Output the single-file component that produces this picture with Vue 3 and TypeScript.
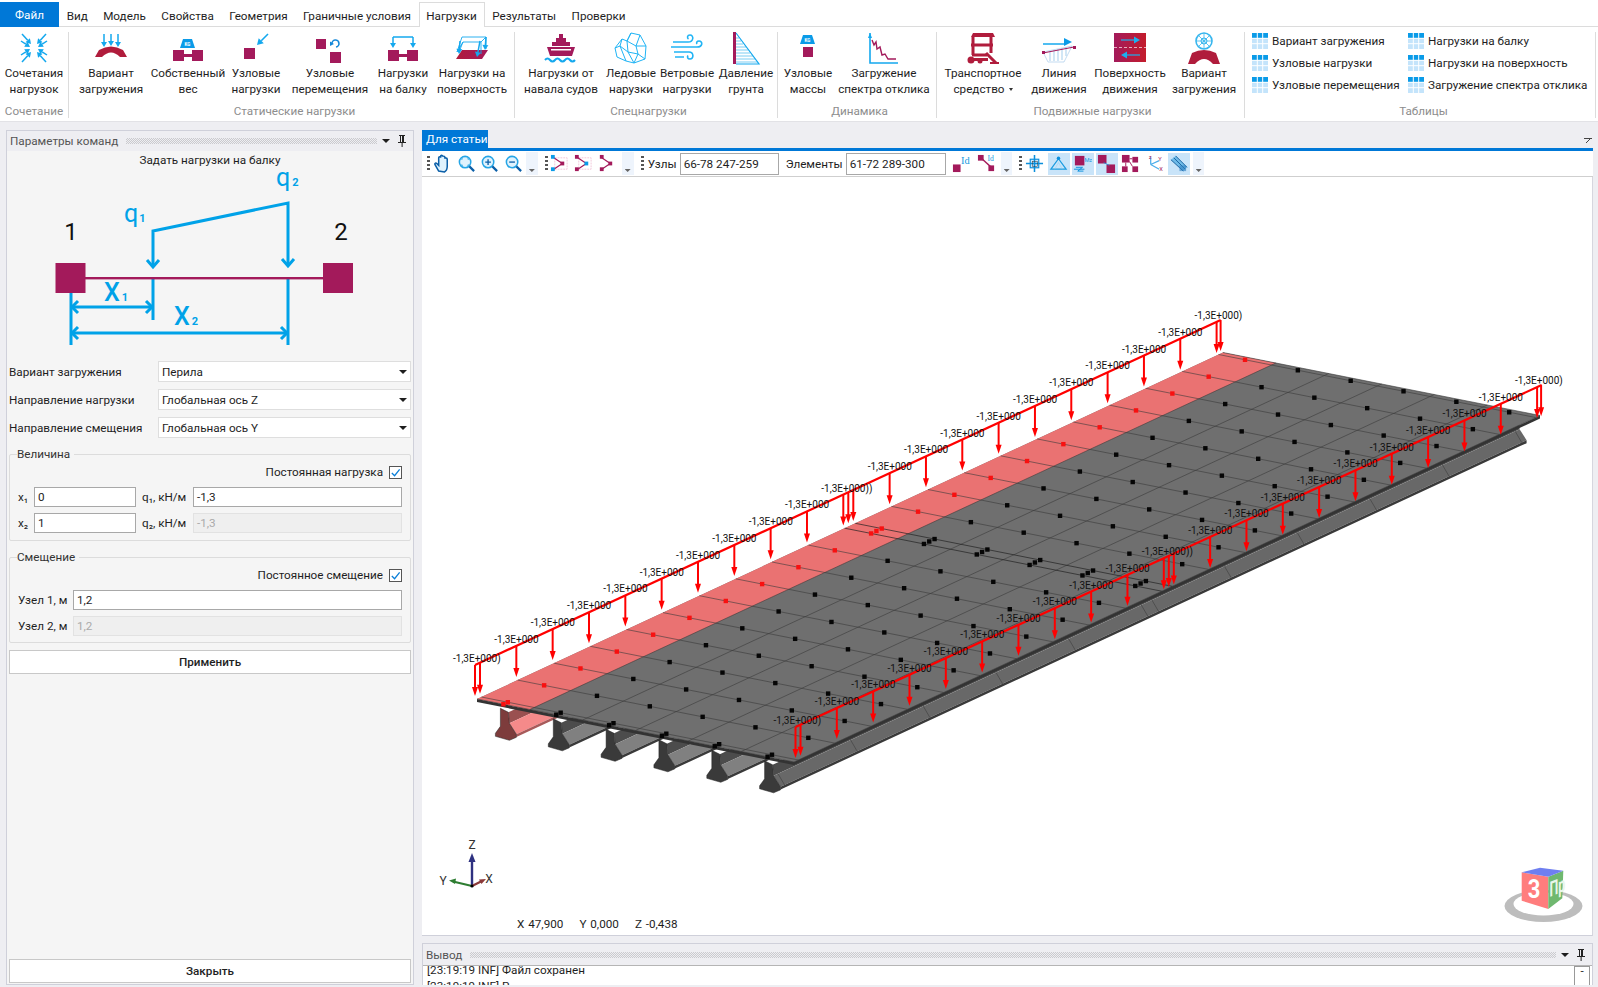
<template>
  <div class="app">
    <!-- Menu tabs -->
    <div class="menu">
      <div class="file-tab">Файл</div>
      <div
        v-for="tab in menuTabs"
        :key="tab"
        class="menu-tab"
        :class="{ active: tab === 'Нагрузки' }"
      >{{ tab }}</div>
    </div>

    <!-- Ribbon -->
    <div class="ribbon">
      <div v-for="group in ribbon" :key="group.label" class="r-group" :style="{ width: group.width + 'px', paddingLeft: group.pad + 'px' }">
        <div class="r-items">
          <div v-for="item in group.items" :key="item.icon + item.lines[0]" class="r-item" :style="{ width: item.width + 'px' }">
            <svg class="r-icon" viewBox="0 0 34 34" v-html="icons[item.icon]"></svg>
            <div class="r-text">
              <div v-for="(line, i) in item.lines" :key="line">{{ line }}<span v-if="item.drop && i === 1" class="drop-mark"></span></div>
            </div>
          </div>
        </div>
        <div class="r-label">{{ group.label }}</div>
      </div>
      <div class="r-group tables">
        <div class="t-grid">
          <div v-for="t in tableLinks" :key="t" class="t-link">
            <svg class="t-icon" viewBox="0 0 16 16" v-html="icons.table"></svg>
            <span>{{ t }}</span>
          </div>
        </div>
        <div class="r-label">Таблицы</div>
      </div>
    </div>

    <div class="main">
      <!-- Command parameters panel -->
      <aside class="panel">
        <div class="dock-head">
          <span class="dock-title">Параметры команд</span>
          <span class="dots"></span>
          <span class="caret"></span>
          <svg class="pin" viewBox="0 0 10 14"><path d="M2 1h6v1H7v6h2v1H5.6v4h-1V9H1V8h2V2H2zM4 2v6h1V2z" fill="#222" /></svg>
        </div>
        <div class="cmd-title">Задать нагрузки на балку</div>

        <svg class="beam-fig" viewBox="6 169 400 189">
          <g fill="none" stroke="#00a2e8" stroke-width="3">
            <path d="M153 267V231L288 203V266" />
            <path d="M147 260L153 267L159 260M282 259L288 266L294 259" />
            <path d="M153 279V320M288 278V345M71 293V345" />
            <path d="M71 307H153M71 333H288" />
            <path d="M78 301L72 307L78 313M146 301L152 307L146 313M78 327L72 333L78 339M281 327L287 333L281 339" />
          </g>
          <rect x="85" y="277" width="238" height="2.4" fill="#a31a5b" />
          <rect x="55.5" y="263" width="30" height="30" fill="#a31a5b" />
          <rect x="323" y="263" width="30" height="30" fill="#a31a5b" />
          <text x="71" y="240" class="fig-num">1</text>
          <text x="341" y="240" class="fig-num">2</text>
          <text x="124" y="222" class="fig-q">q<tspan class="fig-sub" dx="1">1</tspan></text>
          <text x="276" y="186" class="fig-q">q<tspan class="fig-sub" dx="2">2</tspan></text>
          <text x="104" y="301" class="fig-q fig-x">X<tspan class="fig-sub" dx="2">1</tspan></text>
          <text x="174" y="325" class="fig-q fig-x">X<tspan class="fig-sub" dx="2">2</tspan></text>
        </svg>

        <div class="combos">
          <div v-for="c in combos" :key="c.label" class="combo-row">
            <span class="combo-label">{{ c.label }}</span>
            <div class="combo"><span>{{ c.value }}</span><i class="caret"></i></div>
          </div>
        </div>

        <fieldset class="box first">
          <legend>Величина</legend>
          <div class="check-row">
            <span>Постоянная нагрузка</span>
            <span class="check"><svg viewBox="0 0 12 12"><path d="M2 6.5L5 9.5L10.5 2.5" fill="none" stroke="#0a7fd8" stroke-width="1.4" /></svg></span>
          </div>
          <div class="load-grid">
            <span>x₁</span>
            <div class="field">0</div>
            <span class="q-label">q₁, кН/м</span>
            <div class="field">-1,3</div>
            <span>x₂</span>
            <div class="field">1</div>
            <span class="q-label">q₂, кН/м</span>
            <div class="field off">-1,3</div>
          </div>
        </fieldset>

        <fieldset class="box second">
          <legend>Смещение</legend>
          <div class="check-row">
            <span>Постоянное смещение</span>
            <span class="check"><svg viewBox="0 0 12 12"><path d="M2 6.5L5 9.5L10.5 2.5" fill="none" stroke="#0a7fd8" stroke-width="1.4" /></svg></span>
          </div>
          <div class="shift-grid">
            <span>Узел 1, м</span>
            <div class="field">1,2</div>
            <span>Узел 2, м</span>
            <div class="field off">1,2</div>
          </div>
        </fieldset>

        <div class="btn apply">Применить</div>
        <div class="btn close">Закрыть</div>
      </aside>

      <div class="work">
        <div class="doc-tabs">
          <div class="doc-tab">Для статьи</div>
          <span class="doc-menu"></span>
        </div>

        <!-- Viewport toolbar -->
        <div class="toolbar">
          <span class="grip g1"></span>
          <span v-for="b in tools1" :key="b" class="tbtn"><svg viewBox="0 0 20 20" v-html="icons[b]"></svg></span>
          <span class="more"></span>
          <span class="grip"></span>
          <span v-for="b in tools2" :key="b" class="tbtn"><svg viewBox="0 0 20 20" v-html="icons[b]"></svg></span>
          <span class="more m2"></span>
          <span class="grip"></span>
          <span class="t-label l1">Узлы</span>
          <div class="t-field f1">66-78 247-259</div>
          <span class="t-label l2">Элементы</span>
          <div class="t-field f2">61-72 289-300</div>
          <span v-for="b in tools3" :key="b" class="tbtn id-btn"><svg viewBox="0 0 20 20" v-html="icons[b]"></svg></span>
          <span class="more m3"></span>
          <span class="grip"></span>
          <span class="t-set">
            <span v-for="b in tools4" :key="b.icon" class="tbtn small" :class="{ on: b.on }"><svg viewBox="0 0 20 20" v-html="icons[b.icon]"></svg></span>
          </span>
          <span class="more m4"></span>
        </div>

        <!-- 3D view -->
        <div class="viewport">
          <svg class="scene" viewBox="422 177 1171 759">
            <g v-for="g in girders" :key="g.key">
              <path :d="g.web" :fill="g.webFill" />
              <path :d="g.flange" :fill="g.flangeFill" />
              <path :d="g.lip" :fill="g.lipFill" />
              <path :d="g.section" :fill="g.sectionFill" stroke="#222" stroke-width="0.5" />
            </g>
            <path v-for="(t, i) in girderTicks" :key="'tk' + i" :d="t" stroke="#444" stroke-width="0.7" />

            <path :d="edgeFront" fill="#333" />
            <path :d="edgeRight" fill="#333" />
            <path :d="deckPath" fill="#6f6f6f" />
            <path :d="stripPath" fill="#ea7272" />
            <path :d="gridPath" fill="none" stroke="#3a3a3a" stroke-width="0.6" />
            <path :d="midPath" fill="none" stroke="#222" stroke-width="0.7" />
            <rect v-for="(d, i) in nodes" :key="'n' + i" :x="d.x - 2.2" :y="d.y - 2.2" width="4.4" height="4.4" :fill="d.red ? '#f81010' : '#050505'" />

            <g v-for="(l, li) in loads" :key="'l' + li">
              <path :d="l.beam" stroke="#f00" stroke-width="2.2" fill="none" />
              <g v-for="(a, ai) in l.arrows" :key="ai">
                <path :d="a.shaft" stroke="#f00" stroke-width="2" />
                <path :d="a.head" fill="#f00" />
              </g>
              <text v-for="(a, ai) in l.labels" :key="'t' + ai" :x="a.x" :y="a.y" class="load-text">{{ a.text }}</text>
            </g>

            <!-- Axis triad -->
            <path d="M472 886V860" stroke="#2e3180" stroke-width="2.4" />
            <path d="M472 853L468.500 862H475.500Z" fill="#2e3180" />
            <path d="M472 886L453 881.500" stroke="#2e7d32" stroke-width="2.2" />
            <path d="M449 880.500L456 878.500L455 884Z" fill="#2e7d32" />
            <path d="M472 886L482 881" stroke="#8b3a3a" stroke-width="2.2" />
            <path d="M486 879L479 879.500L481.500 884Z" fill="#8b3a3a" />
            <circle cx="472" cy="886" r="1.600" fill="#000" />
            <text x="472" y="849" class="axis-text">Z</text>
            <text x="443" y="885" class="axis-text">Y</text>
            <text x="489" y="883" class="axis-text">X</text>

            <!-- View cube -->
            <ellipse cx="1543.500" cy="906" rx="39" ry="16" fill="#bdbdbd" />
            <ellipse cx="1543.500" cy="904" rx="30" ry="11.500" fill="#fff" />
            <path d="M1521.700 872.300L1548.300 876.700V909L1521.700 900.700Z" fill="#ff7d7d" />
            <path d="M1548.300 876.700L1563.300 870.700L1562.300 898.300L1548.300 909Z" fill="#6fb86f" />
            <path d="M1521.700 872.300L1540 867.700L1563.300 870.700L1548.300 876.700Z" fill="#6f7ff0" />
            <text transform="translate(1534 898) scale(1 1.150)" class="cube-num">3</text>
            <text transform="translate(1549.500 897) skewY(-22) scale(.62 1.050)" class="cube-side">Пр</text>
          </svg>
          <div class="coords"><span>X 47,900</span><span>Y 0,000</span><span>Z -0,438</span></div>
        </div>

        <!-- Output panel -->
        <div class="output">
          <div class="dock-head out-head">
            <span class="dock-title">Вывод</span>
            <span class="dots"></span>
            <span class="caret"></span>
            <svg class="pin" viewBox="0 0 10 14"><path d="M2 1h6v1H7v6h2v1H5.6v4h-1V9H1V8h2V2H2zM4 2v6h1V2z" fill="#222" /></svg>
          </div>
          <div class="log">
            <div class="log-lines">
              <div>[23:19:19 INF] Файл сохранен</div>
              <div>[23:19:19 INF] Р</div>
            </div>
            <div class="scroll"><span>-</span></div>
          </div>
        </div>
      </div>
    </div>
  </div>
</template>

<script setup lang="ts">
interface RibbonItem {
  icon: string;
  lines: string[];
  width: number;
  drop?: boolean;
}

const MAG = '#a31a5b';
const RED = '#b01c3c';
const CY = '#14a8ee';

const menuTabs = ['Вид', 'Модель', 'Свойства', 'Геометрия', 'Граничные условия', 'Нагрузки', 'Результаты', 'Проверки'];

// small helpers for the icon markup
function arr(x1: number, y1: number, x2: number, y2: number, c = CY, w = 1.5, h = 5): string {
  const a = Math.atan2(y2 - y1, x2 - x1);
  const bx = x2 - Math.cos(a) * h;
  const by = y2 - Math.sin(a) * h;
  const nx = -Math.sin(a) * h * 0.6;
  const ny = Math.cos(a) * h * 0.6;
  return `<path d="M${x1} ${y1}L${bx} ${by}" stroke="${c}" stroke-width="${w}" fill="none"/><path d="M${x2} ${y2}L${bx + nx} ${by + ny}L${bx - nx} ${by - ny}Z" fill="${c}"/>`;
}
const sq = (x: number, y: number, s: number, c = MAG) => `<rect x="${x}" y="${y}" width="${s}" height="${s}" fill="${c}"/>`;
const kg = (x: number, y: number) =>
  `<path d="M${x + 3} ${y}H${x + 12}L${x + 15} ${y + 9}H${x}Z" fill="#0a9be8"/><text x="${x + 7.5}" y="${y + 7}" font-size="4.500" font-weight="700" fill="#fff" text-anchor="middle" font-family="Roboto,sans-serif">KG</text>`;
const arch = `<path d="M1 25L5 18Q17 11 29 18L33 25H26Q17 16 8 25Z" fill="${RED}"/>`;

const icons: Record<string, string> = {
  comb:
    arr(5, 2, 14, 12) + arr(29, 2, 20, 12) + arr(5, 30, 14, 20) + arr(29, 30, 20, 20) +
    arr(4, 9, 13, 15) + arr(30, 9, 21, 15) + arr(4, 23, 13, 17) + arr(30, 23, 21, 17),
  variant: arch + arr(10, 2, 10, 15) + arr(17, 2, 17, 14) + arr(24, 2, 24, 15),
  selfw: kg(9, 7) + sq(2, 18, 11) + sq(21, 18, 11) + `<rect x="12" y="22" width="10" height="3" fill="${MAG}"/>`,
  nodeload: sq(5, 16, 11) + arr(29, 2, 18, 13, CY, 1.6, 6),
  nodedisp: sq(3, 7, 10) + sq(17, 20, 11) +
    `<path d="M19 12A3.500 3.500 0 1 1 23 15" stroke="#1487d8" stroke-width="1.600" fill="none"/><path d="M17 9.500L21 12L17 14Z" fill="#1487d8"/>`,
  beamload: sq(2, 18, 11) + sq(21, 18, 11) + `<rect x="12" y="22" width="10" height="3" fill="${MAG}"/>` +
    `<path d="M7 5H27" stroke="${CY}" stroke-width="1.500"/>` + arr(7, 5, 7, 16) + arr(27, 5, 27, 16),
  surface:
    `<defs><linearGradient id="sf" x1="0" x2="1"><stop offset="0" stop-color="${RED}"/><stop offset="1" stop-color="${MAG}"/></linearGradient></defs>` +
    `<path d="M1 27L7 18H33L27 27Z" fill="url(#sf)"/>` +
    `<path d="M2 20L7 5H31L26 10H8ZM26 10L26 22M31 5V17M8 10L4 20" stroke="${CY}" fill="none" stroke-width=".9"/>` +
    arr(5, 9, 4, 22) + arr(25, 9, 22, 25) + arr(31, 5, 30, 18),
  ship:
    `<path d="M15 2H19V6H22V10H26V14H8V10H12V6H15Z" fill="${MAG}"/><path d="M3 15H31L28 24H6Z" fill="${MAG}"/><rect x="7" y="17" width="20" height="1.500" fill="#fff"/>` +
    `<path d="M1 28Q3.500 25 6 28T11 28T16 28T21 28T26 28T31 28" stroke="${CY}" stroke-width="2" fill="none"/>`,
  ice:
    `<g stroke="#20b4f5" stroke-width="1" fill="none"><path d="M17 1L26 3L32 14L31 27L20 31L12 29L3 25L1 16L8 7L13 9Z"/><path d="M13 9L17 1M13 9L22 14L26 3M22 14L32 14M22 14L24 22L31 27M24 22L14 20L20 31M14 20L13 9M14 20L6 14L8 7M6 14L1 16M6 14L12 29M24 22L20 31"/></g>`,
  wind:
    `<g stroke="#20b4f5" stroke-width="1.600" fill="none"><path d="M3 10H18C24 10 24 3 20 3C17 3 17 6 18.500 7"/><path d="M3 15H27C33 15 33 9 29 9C27 9 26 10.500 27 12"/><path d="M4 20H19C24 20 24 27 20 27C17.500 27 17 25 18 23.500"/><path d="M1 15H3M5 25H14"/></g>`,
  pressure:
    `<g stroke="#5ac0ef" stroke-width=".8"><path d="M7 6H10M7 9H12M7 12H14M7 15H17M7 18H19M7 21H21M7 24H24M7 27H26M7 30H29"/></g>` +
    `<path d="M7 1L30 32H7" fill="none" stroke="${CY}" stroke-width="1.200"/><rect x="4" y="0" width="3" height="32" fill="${MAG}"/>`,
  mass: kg(9, 3) + sq(12, 15, 10) + `<rect x="11" y="13" width="12" height="2" fill="#fff"/>`,
  spectrum:
    `<path d="M3 1V31H31" fill="none" stroke="${CY}" stroke-width="1.600"/><path d="M3 1L1 6H5Z" fill="${CY}"/>` +
    `<path d="M5 8L7 13L9 10L10 17L13 15L15 23L18 22L21 27H29" fill="none" stroke="${MAG}" stroke-width="1.400"/>`,
  truck:
    `<path d="M7 1H27L29 5H5Z" fill="${RED}"/><g fill="none" stroke="${RED}" stroke-width="3"><path d="M7 5V23M25 5V21M5 13H27M6 23H21"/><path d="M20 21L30 31"/></g><path d="M2 26H22V29H2ZM24 30H33V32H24Z" fill="${RED}"/><circle cx="5" cy="28" r="3.500" fill="${RED}"/><circle cx="14" cy="29" r="2.500" fill="${RED}"/><circle cx="16" cy="18" r="2" fill="#fff"/>`,
  line:
    `<path d="M1 20L30 14L22 30H6Z" fill="none" stroke="#9cc5e8" stroke-width=".6"/><path d="M8 19V29M12 18V29M16 17V29M20 16V28M24 15V24" stroke="#7fb9e4" stroke-width=".7"/>` +
    `<path d="M1 12H22" stroke="${CY}" stroke-width="1.500"/><path d="M30 10L22 6V14Z" fill="#0a9be8"/><path d="M1 21L32 15" stroke="${MAG}" stroke-width="1"/>` + sq(0, 19, 3) + sq(31, 14, 3),
  moving:
    `<defs><linearGradient id="mv" x1="0" x2="1"><stop offset="0" stop-color="${MAG}"/><stop offset="1" stop-color="#c31c2c"/></linearGradient></defs>` +
    `<rect x="1" y="1" width="32" height="29" fill="url(#mv)"/><path d="M1 15.500H33" stroke="#f3d4dc" stroke-dasharray="3 2" stroke-width=".8"/>` +
    arr(8, 8, 27, 8, '#1ab0f0', 1.2, 6) + arr(27, 23, 8, 23, '#1ab0f0', 1.2, 6),
  wheel:
    arch.replace('M1 25L5 18', 'M1 32L5 21').replace('Q17 11 29 18L33 25H26Q17 16 8 25Z', 'Q17 15 29 21L33 32H26Q17 22 8 32Z') +
    `<g stroke="#38b6ee" fill="none"><circle cx="17" cy="9" r="8" stroke-width="1.600"/><circle cx="17" cy="9" r="3" stroke-width="1"/><path d="M17 1V17M9 9H25M11.500 3.500L22.500 14.500M22.500 3.500L11.500 14.500" stroke-width=".8"/></g>`,
  table:
    `<rect x="0" y="0" width="16" height="16" fill="#c4e4fb"/><rect x="0" y="0" width="16" height="5" fill="#0a9be8"/>` +
    `<path d="M5.300 0V16M10.700 0V16M0 5.300H16M0 10.700H16" stroke="#fff" stroke-width="1"/>`,
  // toolbar
  hand:
    `<path d="M6 18L2 11C1.500 9.500 3 9 4 10L6 12V4C6 2.500 8 2.500 8 4V2.500C8 1 10 1 10 2.500V3C10 2 12.500 2 12.500 3.500V5C12.500 4 15 4 15 5.500V13C15 16 14 18 12 19Z" fill="#dff2fd" stroke="#0b5fa8" stroke-width="1.600"/>`,
  zoomfit:
    `<circle cx="8.500" cy="8.500" r="6" fill="#dff2fd" stroke="#25a5e6" stroke-width="1.600"/><path d="M13 13L18 18" stroke="#0b5fa8" stroke-width="2.400"/><path d="M5 6V5H6M11 5H12V6M12 11V12H11M6 12H5V11" stroke="#25a5e6" fill="none"/>`,
  zoomin:
    `<circle cx="8.500" cy="8.500" r="6" fill="#dff2fd" stroke="#25a5e6" stroke-width="1.600"/><path d="M13 13L18 18" stroke="#0b5fa8" stroke-width="2.400"/><path d="M5.500 8.500H11.500M8.500 5.500V11.500" stroke="#0b5fa8" stroke-width="1.400"/>`,
  zoomout:
    `<circle cx="8.500" cy="8.500" r="6" fill="#dff2fd" stroke="#25a5e6" stroke-width="1.600"/><path d="M13 13L18 18" stroke="#0b5fa8" stroke-width="2.400"/><path d="M5.500 8.500H11.500" stroke="#0b5fa8" stroke-width="1.400"/>`,
  sel1:
    `<rect x="5" y="4" width="13" height="12" fill="none" stroke="#eeb6cf" stroke-width=".8" stroke-dasharray="2 1"/><path d="M4 4L13 10L4 16" fill="none" stroke="${MAG}" stroke-width="1.300"/>` +
    sq(1, 1, 4, '#0a9be8') + sq(11, 8, 4, MAG) + sq(1, 14, 4, '#0a9be8'),
  sel2:
    `<rect x="5" y="4" width="13" height="12" fill="none" stroke="#eeb6cf" stroke-width=".8" stroke-dasharray="2 1"/><path d="M4 4L13 10L4 16" fill="none" stroke="${MAG}" stroke-width="1.300"/>` +
    sq(1, 1, 4) + sq(11, 8, 4, '#0a9be8') + sq(1, 14, 4),
  sel3: `<path d="M5 4L14 10L5 16" fill="none" stroke="${MAG}" stroke-width="1.300"/>` + sq(3, 1, 4) + sq(12, 8, 4) + sq(3, 14, 4),
  idnode: sq(1, 11, 8) + `<text x="9.500" y="10" font-size="11" fill="#1a9be0" font-family="Liberation Serif,serif">Id</text>`,
  idelem:
    `<path d="M4 4L15 14" stroke="${MAG}" stroke-width="1.600"/>` + sq(1, 1, 6) + sq(12, 12, 6) +
    `<text x="11" y="7.500" font-size="8" fill="#1a9be0" font-family="Liberation Serif,serif">Id</text>`,
  target:
    `<rect x="5.500" y="5.500" width="9" height="9" fill="#cde6f8" stroke="#0a8fdc" stroke-width="1.200"/><path d="M10 1V19M1 10H19" stroke="#0a8fdc" stroke-width="1.600"/><rect x="8" y="8" width="5" height="5" fill="none" stroke="#333" stroke-width=".5"/>`,
  support:
    `<path d="M2 16H18L10 5Z" fill="none" stroke="#1a9be0" stroke-width="1.300"/><path d="M6 16L10 9M14 16L10 9" stroke="#8ed0f3" stroke-width=".5"/>` + `<circle cx="10" cy="4.500" r="1.800" fill="#0a8fdc"/>`,
  elemid:
    sq(2, 2, 10) + `<path d="M1 16H12M3 14H10L5 18H11" stroke="#0a8fdc" fill="none" stroke-width="1"/><text x="12" y="8" font-size="6" fill="#1a9be0" font-family="Roboto,sans-serif">Mz</text>`,
  pair: sq(1, 1, 9) + sq(10, 11, 9) + `<path d="M7 9L13 12" stroke="#0a8fdc" stroke-width=".8"/>`,
  group: sq(1, 1, 8) + sq(12, 3, 6) + sq(1, 13, 6) + sq(12, 13, 6) + `<path d="M5 9V13M9 8L12 13M9 5H12" stroke="${MAG}"/>`,
  axes:
    `<path d="M6 11V3M6 11L15 7M6 11L15 16" stroke="#4aaeea" stroke-width="1.300" fill="none"/><text x="4" y="5" font-size="6" fill="${MAG}" font-family="Roboto,sans-serif">z</text><text x="14" y="7" font-size="6" fill="${MAG}" font-family="Roboto,sans-serif">Y</text><text x="15" y="18" font-size="6" fill="${MAG}" font-family="Roboto,sans-serif">X</text>`,
  girder:
    `<path d="M2 6L7 2L19 14L15 18Z" fill="#6fbbe8"/><path d="M2 6L15 18M5 4L17 16M7 2L19 14" stroke="#16609e" stroke-width="1"/><rect x="11" y="12" width="7" height="6" fill="#2e7fbf" opacity=".6"/>`,
};

const ribbon: { label: string; width: number; pad: number; items: RibbonItem[] }[] = [
  { label: 'Сочетание', width: 69, pad: 0, items: [{ icon: 'comb', lines: ['Сочетания', 'нагрузок'], width: 68 }] },
  {
    label: 'Статические нагрузки',
    width: 446,
    pad: 6,
    items: [
      { icon: 'variant', lines: ['Вариант', 'загружения'], width: 72 },
      { icon: 'selfw', lines: ['Собственный', 'вес'], width: 82 },
      { icon: 'nodeload', lines: ['Узловые', 'нагрузки'], width: 54 },
      { icon: 'nodedisp', lines: ['Узловые', 'перемещения'], width: 94 },
      { icon: 'beamload', lines: ['Нагрузки', 'на балку'], width: 52 },
      { icon: 'surface', lines: ['Нагрузки на', 'поверхность'], width: 86 },
    ],
  },
  {
    label: 'Спецнагрузки',
    width: 263,
    pad: 5,
    items: [
      { icon: 'ship', lines: ['Нагрузки от', 'навала судов'], width: 82 },
      { icon: 'ice', lines: ['Ледовые', 'нарузки'], width: 58 },
      { icon: 'wind', lines: ['Ветровые', 'нагрузки'], width: 54 },
      { icon: 'pressure', lines: ['Давление', 'грунта'], width: 64 },
    ],
  },
  {
    label: 'Динамика',
    width: 159,
    pad: 5,
    items: [
      { icon: 'mass', lines: ['Узловые', 'массы'], width: 50 },
      { icon: 'spectrum', lines: ['Загружение', 'спектра отклика'], width: 102 },
    ],
  },
  {
    label: 'Подвижные нагрузки',
    width: 308,
    pad: 4,
    items: [
      { icon: 'truck', lines: ['Транспортное', 'средство'], width: 84, drop: true },
      { icon: 'line', lines: ['Линия', 'движения'], width: 68 },
      { icon: 'moving', lines: ['Поверхность', 'движения'], width: 74 },
      { icon: 'wheel', lines: ['Вариант', 'загружения'], width: 74 },
    ],
  },
];

const tableLinks = [
  'Вариант загружения',
  'Нагрузки на балку',
  'Узловые нагрузки',
  'Нагрузки на поверхность',
  'Узловые перемещения',
  'Загружение спектра отклика',
];

const combos = [
  { label: 'Вариант загружения', value: 'Перила' },
  { label: 'Направление нагрузки', value: 'Глобальная ось Z' },
  { label: 'Направление смещения', value: 'Глобальная ось Y' },
];

const tools1 = ['hand', 'zoomfit', 'zoomin', 'zoomout'];
const tools2 = ['sel1', 'sel2', 'sel3'];
const tools3 = ['idnode', 'idelem'];
const tools4 = [
  { icon: 'target', on: false },
  { icon: 'support', on: true },
  { icon: 'elemid', on: true },
  { icon: 'pair', on: true },
  { icon: 'group', on: false },
  { icon: 'axes', on: false },
  { icon: 'girder', on: true },
];

// --- 3D scene, a parallel projection of the deck given by its corners ---
type Pt = [number, number];
const A: Pt = [477, 699];
const U: Pt = [317, 63];
const V: Pt = [746, -346.5];
const at = (u: number, v: number, dx = 0, dy = 0): Pt => [A[0] + U[0] * u + V[0] * v + dx, A[1] + U[1] * u + V[1] * v + dy];
const fmt = (p: Pt) => `${p[0].toFixed(1)} ${p[1].toFixed(1)}`;
const poly = (pts: Pt[]) => 'M' + pts.map(fmt).join('L') + 'Z';

// stations along the span, in px of screen x from the near end
const stations: number[] = [0];
for (let k = 0; k <= 10; k++) stations.push(4.4 + 36.33 * k);
stations.push(373);
for (let k = 0; k <= 10; k++) stations.push(378.3 + 36.33 * k);
const stationV = stations.map((s) => s / V[0]);

const deckPath = poly([at(0, 0), at(1, 0), at(1, 1), at(0, 1)]);
const stripPath = poly([at(0, 0), at(1 / 6, 0), at(1 / 6, 1), at(0, 1)]);
const edgeFront = poly([at(0, 0), at(1, 0), at(1, 0, 0, 3), at(0, 0, 0, 3)]);
const edgeRight = poly([at(1, 0), at(1, 1), at(1, 1, 0, 3), at(1, 0, 0, 3)]);

const gridPath = [
  ...stationV.filter((_, i) => i !== 11 && i !== 12 && i !== 13).map((v) => `M${fmt(at(0, v))}L${fmt(at(1, v))}`),
  ...[1, 2, 3, 4, 5].map((k) => `M${fmt(at(k / 6, 0))}L${fmt(at(k / 6, 1))}`),
  `M${fmt(at(1, 0))}L${fmt(at(1, 1))}L${fmt(at(0, 1))}`,
].join('');
const midPath = [stationV[11], stationV[13]].map((v) => `M${fmt(at(0, v))}L${fmt(at(1, v))}`).join('');

const nodes = stationV.flatMap((v) =>
  [0, 1, 2, 3, 4, 5].map((k) => {
    const p = at((k + 0.5) / 6, v);
    return { x: p[0], y: p[1], red: k === 0 };
  }),
);

// girder section, offsets from the top centre of its web
const SECTION: Pt[] = [[-3, 4], [-3, 22], [-8, 29], [-8, 32], [6, 36], [13, 33], [13, 30], [6, 19], [5, 8]];
const girders = [0, 1, 2, 3, 4, 5].map((i) => {
  const u = (i + 0.5) / 6;
  const len = i === 5 ? 1 : 0.12;
  const off = (p: Pt, v: number) => at(u, v, p[0], p[1]);
  const pink = i === 0;
  const edge = i === 5;
  return {
    key: i,
    section: poly(SECTION.map((p) => off(p, 0))),
    web: poly([off([5, 8], 0), off([5, 8], len), off([6, 19], len), off([6, 19], 0)]),
    flange: poly([off([6, 19], 0), off([6, 19], len), off([13, 30], len), off([13, 30], 0)]),
    lip: poly([off([13, 30], 0), off([13, 30], len), off([13, 33], len), off([6, 36], len), off([6, 36], 0), off([13, 33], 0)]),
    sectionFill: pink ? '#7d3c3c' : '#3a3a3a',
    webFill: pink ? '#9a5050' : '#4c4c4c',
    flangeFill: pink ? '#f58a8a' : edge ? '#686868' : '#808080',
    lipFill: pink ? '#a85a5a' : '#3a3a3a',
  };
});

const girderTicks = stationV.filter((_, i) => i % 2 === 1).map((v) => `M${fmt(at(5.5 / 6, v, 6, 19))}L${fmt(at(5.5 / 6, v, 13, 31))}`);

// distributed load: a red beam over an edge with arrows down to the deck
function buildLoad(x0: number, y0: number, x1: number, y1: number) {
  const slope = (y1 - y0) / (x1 - x0);
  const steps: number[][] = [[0, 5]];
  for (let k = 1; k <= 9; k++) steps.push([5 + 36.33 * k]);
  const m = 5 + 36.33 * 10;
  steps.push([m, m + 5, m + 10]);
  for (let k = 1; k <= 9; k++) steps.push([m + 10 + 36.33 * k]);
  const last = m + 10 + 36.33 * 10;
  steps.push([last, last + 4]);

  const arrows: { shaft: string; head: string }[] = [];
  const labels: { x: number; y: number; text: string }[] = [];
  steps.forEach((group) => {
    group.forEach((d) => {
      const x = x0 + d;
      const top = y0 + d * slope;
      const tip = top + 31;
      arrows.push({ shaft: `M${x} ${top}V${tip - 5}`, head: `M${x} ${tip}L${x - 3} ${tip - 9}H${x + 3}Z` });
    });
    const x = x0 + group[0];
    labels.push({ x: x - 22, y: y0 + group[0] * slope - 3, text: '-1,3E+000' + ')'.repeat(group.length - 1) });
  });
  return { beam: `M${x0} ${y0}L${x1} ${y1}`, arrows, labels };
}

const loads = [buildLoad(475, 665, 1220.7, 320), buildLoad(795.5, 727, 1541.7, 385)];
</script>

<style>
html,
body {
  margin: 0;
  background: #eeeef2;
}
</style>

<style scoped>
.app {
  width: 1598px;
  height: 987px;
  display: flex;
  flex-direction: column;
  overflow: hidden;
  background: #eeeef2;
  font: 11.7px Roboto, "Noto Sans", sans-serif;
  color: #1e1e1e;
}

/* Menu */
.menu {
  height: 27px;
  flex: none;
  display: flex;
  align-items: flex-end;
  background: #fff;
  border-bottom: 1px solid #dcdcdc;
  box-sizing: border-box;
}
.file-tab {
  width: 59px;
  height: 25px;
  margin-bottom: -1px;
  background: #0078d7;
  color: #fff;
  text-align: center;
  line-height: 26px;
}
.menu-tab {
  height: 25px;
  margin-bottom: -1px;
  padding: 0 6.7px;
  line-height: 26px;
  box-sizing: border-box;
  border: 1px solid transparent;
  border-bottom: 0;
}
.menu-tab.active {
  border-color: #dcdcdc;
  background: #fff;
  position: relative;
}

/* Ribbon */
.ribbon {
  height: 95px;
  flex: none;
  display: flex;
  background: #fff;
  border-bottom: 1px solid #e2e2e6;
  box-sizing: border-box;
  padding-top: 5px;
}
.r-group {
  flex: none;
  box-sizing: border-box;
  height: 86px;
  border-right: 1px solid #dcdcdc;
  display: flex;
  flex-direction: column;
}
.r-items {
  flex: 1;
  display: flex;
}
.r-item {
  flex: none;
  display: flex;
  flex-direction: column;
  align-items: center;
  text-align: center;
}
.r-icon {
  width: 34px;
  height: 34px;
  flex: none;
}
.r-text {
  margin-top: -1px;
  line-height: 16px;
  white-space: nowrap;
}
.drop-mark {
  display: inline-block;
  width: 0;
  height: 0;
  margin-left: 4px;
  vertical-align: middle;
  border-left: 2.5px solid transparent;
  border-right: 2.5px solid transparent;
  border-top: 3px solid #333;
}
.r-label {
  text-align: center;
  color: #8d8d8d;
  line-height: 20px;
  height: 17px;
}
.tables {
  width: 351px;
  padding-left: 7px;
}
.t-grid {
  flex: 1;
  display: grid;
  grid-template-columns: 156px 1fr;
  grid-auto-rows: 22px;
  margin-top: -2px;
}
.t-link {
  display: flex;
  align-items: center;
  gap: 4px;
  white-space: nowrap;
}
.t-icon {
  width: 16px;
  height: 16px;
  flex: none;
}

.main {
  flex: 1;
  min-height: 0;
  display: flex;
  padding: 8px 5px 2px 6px;
  gap: 8px;
}

/* Panel */
.panel {
  width: 408px;
  flex: none;
  box-sizing: border-box;
  display: flex;
  flex-direction: column;
  background: #f5f5f5;
  border: 1px solid #cfd0da;
  padding: 0 2px 1px 2px;
}
.dock-head {
  height: 20px;
  flex: none;
  display: flex;
  align-items: center;
  background: #eeeef2;
  margin: 0 -2px;
  padding: 0 6px 0 3px;
  color: #555;
}
.dock-title {
  white-space: nowrap;
}
.dots {
  flex: 1;
  height: 6px;
  margin: 0 5px 0 8px;
  background: repeating-conic-gradient(#cacace 0 25%, transparent 0 50%) 0 0 / 2px 2px;
}
.caret {
  display: inline-block;
  width: 0;
  height: 0;
  border-left: 4px solid transparent;
  border-right: 4px solid transparent;
  border-top: 4px solid #1e1e1e;
}
.pin {
  width: 10px;
  height: 14px;
  margin-left: 7px;
}
.cmd-title {
  height: 18px;
  line-height: 18px;
  text-align: center;
}
.beam-fig {
  width: 400px;
  height: 189px;
  flex: none;
  margin-left: -3px;
  overflow: visible;
}
.fig-num {
  font: 24px Roboto, sans-serif;
  text-anchor: middle;
  fill: #111;
}
.fig-q {
  font: 25px Roboto, sans-serif;
  fill: #00a2e8;
}
.fig-x {
  font-weight: 500;
}
.fig-sub {
  font-size: 11px;
  font-weight: 700;
}
.combos {
  display: flex;
  flex-direction: column;
  gap: 7px;
  margin-top: 3px;
}
.combo-row {
  display: flex;
  align-items: center;
}
.combo-label {
  width: 149px;
  flex: none;
}
.combo {
  flex: 1;
  height: 21px;
  box-sizing: border-box;
  background: #fff;
  border: 1px solid #dedede;
  display: flex;
  align-items: center;
  justify-content: space-between;
  padding: 0 3px 0 3px;
}
.box {
  margin: 0;
  width: 402px;
  min-width: 0;
  box-sizing: border-box;
  border: 1px solid #dcdcdc;
  border-radius: 2px;
  padding: 0 8px;
}
.box legend {
  padding: 0 4px 0 0;
  margin-left: -1px;
  line-height: 16px;
  color: #333;
}
.first {
  margin-top: 8px;
  height: 95px;
}
.second {
  margin-top: 8px;
  height: 94px;
}
.check-row {
  display: flex;
  justify-content: flex-end;
  align-items: center;
  gap: 6px;
  height: 16px;
  margin-top: 2px;
}
.check {
  width: 13px;
  height: 13px;
  box-sizing: border-box;
  background: #fff;
  border: 1px solid #555;
  display: flex;
}
.check svg {
  width: 11px;
  height: 11px;
}
.load-grid {
  display: grid;
  grid-template-columns: 16px 102px 57px 1fr;
  grid-auto-rows: 20px;
  row-gap: 6px;
  align-items: center;
  margin-top: 7px;
}
.q-label {
  padding-left: 6px;
}
.shift-grid {
  display: grid;
  grid-template-columns: 55px 1fr;
  grid-auto-rows: 20px;
  row-gap: 6px;
  align-items: center;
  margin-top: 7px;
}
.field {
  height: 20px;
  box-sizing: border-box;
  background: #fff;
  border: 1px solid #a8a8a8;
  padding: 0 3px;
  line-height: 18px;
}
.field.off {
  background: #efefef;
  border-color: #e2e2e2;
  color: #aaa;
}
.btn {
  height: 24px;
  flex: none;
  box-sizing: border-box;
  background: #fff;
  border: 1px solid #c8c8c8;
  text-align: center;
  line-height: 22px;
  font-weight: 500;
}
.apply {
  margin-top: 7px;
}
.close {
  margin-top: auto;
}

/* Work area */
.work {
  flex: 1;
  min-width: 0;
  display: flex;
  flex-direction: column;
}
.doc-tabs {
  height: 18px;
  flex: none;
  display: flex;
  justify-content: space-between;
}
.doc-tab {
  width: 66px;
  box-sizing: border-box;
  padding-left: 4px;
  background: #0078d7;
  color: #fff;
  line-height: 19px;
}
.doc-menu {
  width: 8px;
  height: 5px;
  margin: 8px 1px 0 0;
  border-top: 1px solid #444;
  box-sizing: border-box;
  background: linear-gradient(135deg, transparent 48%, #444 48%, #444 52%, transparent 52%);
}
.toolbar {
  height: 29px;
  flex: none;
  box-sizing: border-box;
  border-top: 3px solid #0078d7;
  border-bottom: 1px solid #cfcfcf;
  background: #fff;
  display: flex;
  align-items: center;
}
.grip {
  width: 3px;
  height: 16px;
  margin-left: 7px;
  flex: none;
  background: repeating-linear-gradient(#555 0 2px, transparent 2px 4px);
}
.g1 {
  margin-left: 5px;
  margin-right: 1px;
}
.tbtn {
  width: 23.6px;
  height: 22px;
  flex: none;
  display: flex;
  align-items: center;
  justify-content: center;
  box-sizing: border-box;
}
.tbtn svg {
  width: 19px;
  height: 19px;
}
.more {
  width: 12px;
  height: 23px;
  flex: none;
  margin-left: 0.500px;
  background: #eef4fc;
  position: relative;
}
.more::after {
  content: "";
  position: absolute;
  left: 3px;
  bottom: 3px;
  width: 6px;
  height: 1px;
  border-bottom: 4px solid #666;
  clip-path: polygon(0 0, 100% 0, 100% 20%, 0 20%, 0 40%, 100% 40%, 50% 100%, 0 40%);
}
.m2 {
  margin-left: 3px;
}
.m3 {
  margin-left: 2px;
  width: 11px;
}
.m4 {
  margin-left: 3px;
  width: 11px;
}
.t-label {
  flex: none;
  white-space: nowrap;
}
.l1 {
  width: 27px;
  margin-left: 4px;
}
.l2 {
  width: 55px;
  margin-left: 7px;
}
.t-field {
  height: 22px;
  box-sizing: border-box;
  margin-left: 5px;
  flex: none;
  border: 1px solid #a8a8a8;
  padding: 0 3px;
  line-height: 20px;
}
.f1 {
  width: 99px;
}
.f2 {
  width: 100px;
  margin-right: 4px;
}
.id-btn {
  width: 24.5px;
}
.t-set {
  display: flex;
  gap: 2px;
  margin-left: 2px;
}
.tbtn.small {
  width: 22px;
}
.tbtn.on {
  background: #c9e4f9;
}
.viewport {
  height: 759px;
  flex: none;
  position: relative;
  background: #fff;
  border-right: 1px solid #d6d6de;
  box-sizing: border-box;
  border-bottom: 1px solid #cfd0da;
}
.scene {
  display: block;
  width: 1171px;
  height: 759px;
}
.load-text {
  font: 10px Roboto, sans-serif;
  fill: #111;
}
.axis-text {
  font: 12px Roboto, sans-serif;
  text-anchor: middle;
  fill: #333;
}
.cube-num {
  font: bold 22px Roboto, sans-serif;
  text-anchor: middle;
  fill: #fff;
}
.cube-side {
  font: bold 20px Roboto, sans-serif;
  fill: #e9f6e9;
}
.coords {
  position: absolute;
  left: 95px;
  top: 740px;
  display: flex;
  gap: 16px;
  word-spacing: 1px;
  white-space: nowrap;
}
.output {
  margin-top: 7px;
  flex: 1;
  min-height: 0;
  display: flex;
  flex-direction: column;
  border: 1px solid #cfd0da;
  border-bottom: 0;
}
.out-head {
  margin: 0;
  height: 21px;
}
.log {
  flex: 1;
  min-height: 0;
  position: relative;
  background: #fff;
  overflow: hidden;
  border-top: 1px solid #b5b5b5;
  display: flex;
}
.log-lines {
  flex: 1;
  margin-top: -4px;
  padding-left: 4px;
  line-height: 16px;
}
.scroll {
  width: 14px;
  margin-right: 2px;
  border: 1px solid #999;
  border-bottom: 0;
  flex: none;
  text-align: center;
  line-height: 8px;
}
</style>
